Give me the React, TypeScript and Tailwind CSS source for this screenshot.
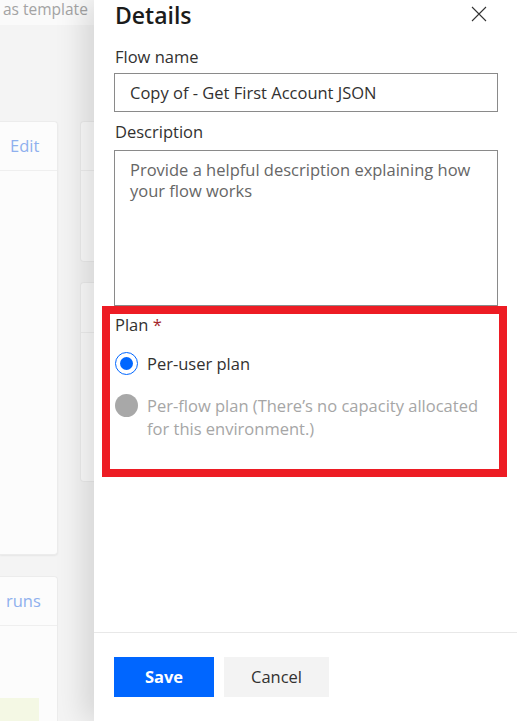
import { useState } from 'react'

const font = { fontFamily: '"Open Sans", "Noto Sans", sans-serif' }

function Radio({ checked, disabled }: { checked?: boolean; disabled?: boolean }) {
  if (disabled) {
    return <span className="block w-[23px] h-[23px] shrink-0 rounded-full bg-[#a8a8a8]" />
  }
  return (
    <span className="w-[23px] h-[23px] shrink-0 rounded-full border border-[#0066ff] flex items-center justify-center">
      {checked && <span className="w-[13px] h-[13px] rounded-full bg-[#0066ff]" />}
    </span>
  )
}

function Backdrop() {
  return (
    <div className="w-[94px] shrink-0 h-full bg-[#f4f4f4] overflow-hidden flex flex-col">
      {/* header strip behind the panel */}
      <div className="h-[25px] bg-[#fafafa] pl-[3px] text-[15.5px] leading-[18px] text-[#a3a3a3] whitespace-nowrap">
        as template
      </div>
      <div className="flex gap-[22px] flex-1">
        <div className="w-[58px] shrink-0 flex flex-col">
          <div className="mt-[96px] h-[434px] bg-[#fcfcfc] rounded-r-[4px] border border-l-0 border-[#ececec] shadow-[0_1px_2px_rgba(0,0,0,0.06)] flex flex-col">
            <div className="h-[49px] border-b border-[#efefef] flex items-center pl-[10px] text-[16.5px] text-[#8fb0ee]">
              Edit
            </div>
          </div>
          <div className="mt-[21px] flex-1 bg-[#fcfcfc] rounded-tr-[4px] border border-l-0 border-b-0 border-[#ececec] flex flex-col">
            <div className="h-[49px] border-b border-[#efefef] flex items-center pl-[6px] text-[16.5px] text-[#8fb0ee]">
              runs
            </div>
            <div className="flex-1" />
            <div className="w-[39px] h-[23px] bg-[#f4f8e4]" />
          </div>
        </div>
        <div className="w-[60px] shrink-0 flex flex-col">
          <div className="mt-[96px] h-[141px] bg-[#fcfcfc] rounded-l-[4px] border border-r-0 border-[#ececec]">
            <div className="h-[49px] border-b border-[#efefef]" />
          </div>
          <div className="mt-[20px] h-[200px] bg-[#fcfcfc] rounded-l-[4px] border border-r-0 border-[#ececec]">
            <div className="h-[50px] border-b border-[#efefef]" />
          </div>
        </div>
      </div>
    </div>
  )
}

export default function App() {
  const [plan, setPlan] = useState('user')
  const [name, setName] = useState('Copy of - Get First Account JSON')

  return (
    <div className="w-[517px] h-[721px] flex overflow-hidden bg-white" style={font}>
      <Backdrop />

      <div className="flex-1 h-full bg-white flex flex-col relative shadow-[-10px_0_28px_rgba(0,0,0,0.13)]">
        <div className="flex-1 pl-5 pr-[19px] flex flex-col">
          {/* Title */}
          <div className="h-[30px] flex items-center justify-between">
            <h1 className="text-[23px] leading-[30px] font-semibold text-[#1b1b1b] pl-px -mt-px">Details</h1>
            <button className="w-[20px] h-[20px] mr-[9px] -mt-[3px] flex items-center justify-center text-[#333]">
              <svg width="16" height="16" viewBox="0 0 16 16" fill="none" stroke="currentColor" strokeWidth="1.1">
                <path d="M1 1 L15 15 M15 1 L1 15" />
              </svg>
            </button>
          </div>

          <label className="mt-[16px] text-[16.5px] leading-[22px] text-[#323130] pl-px">Flow name</label>
          <input
            value={name}
            onChange={(e) => setName(e.target.value)}
            className="mt-[5px] h-[39px] border border-[#8a8a8a] px-[15px] text-[16.5px] text-[#323130] outline-none"
          />

          <label className="mt-[9px] text-[16.5px] leading-[22px] text-[#323130] pl-px">Description</label>
          <textarea
            placeholder="Provide a helpful description explaining how your flow works"
            className="mt-[7px] h-[156px] border border-[#8a8a8a] px-[15px] pt-[8px] text-[16.5px] leading-[21px] resize-none outline-none placeholder:text-[#666]"
          />

          {/* Plan */}
          <div className="-ml-[12px] -mr-[9px] h-[171px] border-[8px] border-[#ed1c24] pl-[5px] pr-2 flex flex-col">
            <div className="text-[16.5px] leading-[22px] text-[#323130]">
              Plan <span className="text-[#a4262c]">*</span>
            </div>
            <button
              onClick={() => setPlan('user')}
              className="mt-[16px] flex items-center gap-[9px] text-left"
            >
              <Radio checked={plan === 'user'} />
              <span className="text-[16.5px] leading-[22px] text-[#323130]">Per-user plan</span>
            </button>
            <div className="mt-[20px] flex items-start gap-[9px]">
              <span className="block mt-[-1px]">
                <Radio disabled />
              </span>
              <span className="text-[16.5px] leading-[23px] text-[#a6a6a6] -mt-[1px]">
                Per-flow plan (There’s no capacity allocated for this environment.)
              </span>
            </div>
          </div>
        </div>

        {/* Footer */}
        <div className="border-t border-[#e8e8e8] pt-[24px] pb-[24px] pl-5 flex gap-[10px]">
          <button className="w-[100px] h-[40px] bg-[#0066ff] text-white text-[16.5px] font-bold">Save</button>
          <button className="w-[105px] h-[40px] bg-[#f3f3f3] text-[#323130] text-[16.5px]">Cancel</button>
        </div>
      </div>
    </div>
  )
}
